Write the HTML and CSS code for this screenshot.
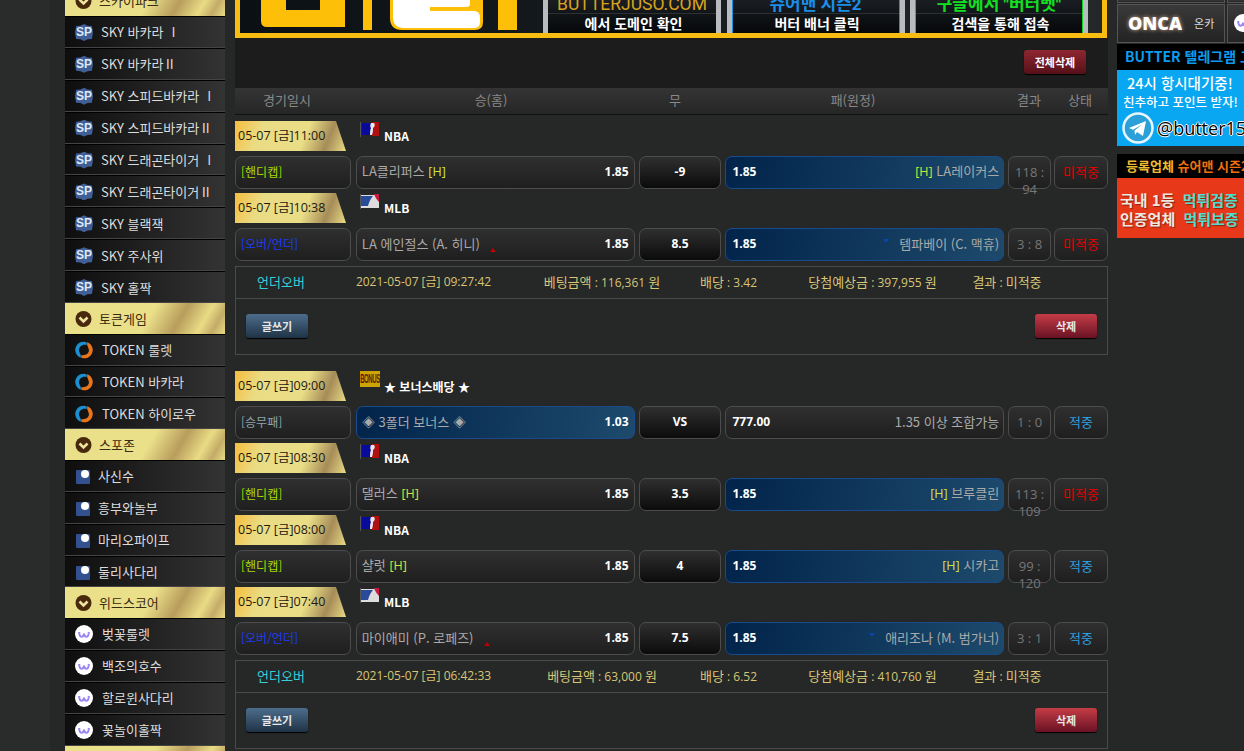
FILE: index.html
```html
<!DOCTYPE html>
<html lang="ko">
<head>
    <meta charset="UTF-8">
    <title>베팅내역</title>
    <link rel="stylesheet" href="styles.css">
</head>
<body>
    <svg class="defs" width="0" height="0">
        <symbol id="i-chev" viewBox="0 0 18 18"><circle cx="8.5" cy="9" r="8" fill="#48290c"/><path d="M4.5 7.500 8.500 11.500 12.500 7.500" fill="none" stroke="#efe3a0" stroke-width="2.600"/></symbol>
        <symbol id="i-token" viewBox="0 0 20 20"><path d="M13 1.500A9 9 0 0 0 6 18.500C8 16 4 13 4.500 9.500 5 6 9 3.500 13 4.500z" fill="#1b8fd0"/><path d="M7 18.500A9 9 0 0 0 14 1.500C12 4 15.500 7 15.500 10.500 15.500 14 11 16.500 7 15.500z" fill="#e8741c"/></symbol>
        <symbol id="i-square" viewBox="0 0 18 18"><rect x="1" y="3" width="14" height="14" rx="1" fill="#33508f"/><circle cx="10" cy="7" r="4" fill="#fff"/></symbol>
        <symbol id="i-w" viewBox="0 0 18 18"><circle cx="9" cy="9" r="9" fill="#fff"/><path d="M4.200 7c0 6 4.300 6 4.800 1.500C9.500 13 13.800 13 13.800 7" fill="none" stroke="#9c86f2" stroke-width="2"/></symbol>
        <symbol id="i-nba" viewBox="0 0 19 15"><rect width="1" height="15" fill="#555"/><rect x="2" y="1" width="11" height="12" fill="#0a0a9a"/><rect x="12" y="0" width="7" height="14" fill="#b01010"/><path d="M11 1h3c1 1 1 3 0 4l-1 1c0 2 0 4-1 7h-2c0-3 0-5 1-7-1-1-1-3 0-5z" fill="#e8e8e8"/></symbol>
        <symbol id="i-mlb" viewBox="0 0 19 15"><rect width="1" height="15" fill="#555"/><rect x="1" y="1" width="18" height="13" fill="#ddd"/><path d="M1 2H13C10 5 9 9 8 12H1z" fill="#2a4a9a"/><path d="M14 0h5v8c-2-2-4-5-5-8z" fill="#c81c3c"/></symbol>
    </svg>

    <div class="page">
        <div class="gutter"></div>

        <aside class="menu">
            <div class="menu-head first"><svg class="ico"><use href="#i-chev"/></svg>스카이파크</div>
            <a class="menu-item sp"><span class="sp-ico">SP</span>SKY 바카라 Ⅰ</a>
            <a class="menu-item sp"><span class="sp-ico">SP</span>SKY 바카라Ⅱ</a>
            <a class="menu-item sp"><span class="sp-ico">SP</span>SKY 스피드바카라 Ⅰ</a>
            <a class="menu-item sp"><span class="sp-ico">SP</span>SKY 스피드바카라Ⅱ</a>
            <a class="menu-item sp"><span class="sp-ico">SP</span>SKY 드래곤타이거 Ⅰ</a>
            <a class="menu-item sp"><span class="sp-ico">SP</span>SKY 드래곤타이거Ⅱ</a>
            <a class="menu-item sp"><span class="sp-ico">SP</span>SKY 블랙잭</a>
            <a class="menu-item sp"><span class="sp-ico">SP</span>SKY 주사위</a>
            <a class="menu-item sp"><span class="sp-ico">SP</span>SKY 홀짝</a>
            <div class="menu-head"><svg class="ico"><use href="#i-chev"/></svg>토큰게임</div>
            <a class="menu-item token"><svg class="ico"><use href="#i-token"/></svg>TOKEN 룰렛</a>
            <a class="menu-item token"><svg class="ico"><use href="#i-token"/></svg>TOKEN 바카라</a>
            <a class="menu-item token"><svg class="ico"><use href="#i-token"/></svg>TOKEN 하이로우</a>
            <div class="menu-head"><svg class="ico"><use href="#i-chev"/></svg>스포존</div>
            <a class="menu-item square"><svg class="ico"><use href="#i-square"/></svg>사신수</a>
            <a class="menu-item square"><svg class="ico"><use href="#i-square"/></svg>흥부와놀부</a>
            <a class="menu-item square"><svg class="ico"><use href="#i-square"/></svg>마리오파이프</a>
            <a class="menu-item square"><svg class="ico"><use href="#i-square"/></svg>둘리사다리</a>
            <div class="menu-head"><svg class="ico"><use href="#i-chev"/></svg>위드스코어</div>
            <a class="menu-item wind"><svg class="ico"><use href="#i-w"/></svg>벚꽃룰렛</a>
            <a class="menu-item wind"><svg class="ico"><use href="#i-w"/></svg>백조의호수</a>
            <a class="menu-item wind"><svg class="ico"><use href="#i-w"/></svg>할로윈사다리</a>
            <a class="menu-item wind"><svg class="ico"><use href="#i-w"/></svg>꽃놀이홀짝</a>
            <div class="menu-head"></div>
        </aside>

        <main class="content">
            <div class="banner">
                <svg class="banner-logo" width="303" height="33" viewBox="0 0 303 33">
                    <path d="M21 0H46V10H80V0H105V27H27Q21 27 21 21z" fill="#fdbf08"/>
                    <rect x="123" y="0" width="9" height="30" fill="#fdbf08"/>
                    <path d="M150 0H243V22Q243 30 235 30H162Q150 30 150 18z" fill="#fdbf08"/>
                    <path d="M153 0H230V4Q230 7 226 7H190V11H234Q240 11 240 18V22Q240 28 234 28H164Q153 28 153 17z" fill="#fff"/>
                    <rect x="258" y="0" width="19" height="30" fill="#fdbf08"/>
                </svg>
                <div class="ban-cards">
                    <div class="ban-card amber"><span class="ban-top">BUTTERJUSO.COM</span><span class="ban-sub">에서 도메인 확인</span></div>
                    <div class="ban-card blue"><span class="ban-top">슈어맨 시즌2</span><span class="ban-sub">버터 배너 클릭</span></div>
                    <div class="ban-card green"><span class="ban-top">구글에서 "버터벳"</span><span class="ban-sub">검색을 통해 접속</span></div>
                </div>
            </div>

            <div class="toolbar"><button class="btn btn-dark-red">전체삭제</button></div>

            <div class="table-head">
                <span>경기일시</span><span>승(홈)</span><span>무</span><span>패(원정)</span><span>결과</span><span>상태</span>
            </div>

            <section class="bet-group">
                <div class="game-title">
                    <div class="ribbon">05-07 [금]11:00</div>
                    <svg class="flag"><use href="#i-nba"/></svg><b class="league">NBA</b>
                </div>
                <div class="game-row">
                    <div class="cell type handi">[핸디캡]</div>
                    <div class="cell home"><span class="team">LA클리퍼스 <i>[H]</i></span><b>1.85</b></div>
                    <div class="cell mid">-9</div>
                    <div class="cell away on"><b>1.85</b><span class="team"><i>[H]</i> LA레이커스</span></div>
                    <div class="cell score">118 : 94</div>
                    <div class="cell status miss">미적중</div>
                </div>
                <div class="game-title">
                    <div class="ribbon">05-07 [금]10:38</div>
                    <svg class="flag"><use href="#i-mlb"/></svg><b class="league">MLB</b>
                </div>
                <div class="game-row">
                    <div class="cell type ou">[오버/언더]</div>
                    <div class="cell home"><span class="team">LA 에인절스 (A. 히니)<em class="tri-up"></em></span><b>1.85</b></div>
                    <div class="cell mid">8.5</div>
                    <div class="cell away on"><b>1.85</b><span class="team"><em class="tri-down"></em>템파베이 (C. 맥휴)</span></div>
                    <div class="cell score">3 : 8</div>
                    <div class="cell status miss">미적중</div>
                </div>
                <div class="slip">
                    <div class="slip-info">
                        <span class="slip-kind">언더오버</span>
                        <span class="num">2021-05-07 [금] 09:27:42</span>
                        <span>베팅금액<span class="num"> : 116,361 </span>원</span>
                        <span>배당<span class="num"> : 3.42</span></span>
                        <span>당첨예상금<span class="num"> : 397,955 </span>원</span>
                        <span>결과<span class="num"> : </span>미적중</span>
                    </div>
                    <div class="slip-actions">
                        <button class="btn btn-blue">글쓰기</button>
                        <button class="btn btn-red">삭제</button>
                    </div>
                </div>
            </section>

            <section class="bet-group">
                <div class="game-title">
                    <div class="ribbon">05-07 [금]09:00</div>
                    <span class="flag-bonus"><span>BONUS</span></span><b class="league bonus">★ 보너스배당 ★</b>
                </div>
                <div class="game-row">
                    <div class="cell type wdl">[승무패]</div>
                    <div class="cell home on"><span class="team">◈ 3폴더 보너스 ◈</span><b>1.03</b></div>
                    <div class="cell mid">VS</div>
                    <div class="cell away"><b>777.00</b><span class="team">1.35 이상 조합가능</span></div>
                    <div class="cell score">1 : 0</div>
                    <div class="cell status hit">적중</div>
                </div>
                <div class="game-title">
                    <div class="ribbon">05-07 [금]08:30</div>
                    <svg class="flag"><use href="#i-nba"/></svg><b class="league">NBA</b>
                </div>
                <div class="game-row">
                    <div class="cell type handi">[핸디캡]</div>
                    <div class="cell home"><span class="team">댈러스 <i>[H]</i></span><b>1.85</b></div>
                    <div class="cell mid">3.5</div>
                    <div class="cell away on"><b>1.85</b><span class="team"><i>[H]</i> 브루클린</span></div>
                    <div class="cell score">113 : 109</div>
                    <div class="cell status miss">미적중</div>
                </div>
                <div class="game-title">
                    <div class="ribbon">05-07 [금]08:00</div>
                    <svg class="flag"><use href="#i-nba"/></svg><b class="league">NBA</b>
                </div>
                <div class="game-row">
                    <div class="cell type handi">[핸디캡]</div>
                    <div class="cell home"><span class="team">샬럿 <i>[H]</i></span><b>1.85</b></div>
                    <div class="cell mid">4</div>
                    <div class="cell away on"><b>1.85</b><span class="team"><i>[H]</i> 시카고</span></div>
                    <div class="cell score">99 : 120</div>
                    <div class="cell status hit">적중</div>
                </div>
                <div class="game-title">
                    <div class="ribbon">05-07 [금]07:40</div>
                    <svg class="flag"><use href="#i-mlb"/></svg><b class="league">MLB</b>
                </div>
                <div class="game-row">
                    <div class="cell type ou">[오버/언더]</div>
                    <div class="cell home"><span class="team">마이애미 (P. 로페즈)<em class="tri-up"></em></span><b>1.85</b></div>
                    <div class="cell mid">7.5</div>
                    <div class="cell away on"><b>1.85</b><span class="team"><em class="tri-down"></em>애리조나 (M. 범가너)</span></div>
                    <div class="cell score">3 : 1</div>
                    <div class="cell status hit">적중</div>
                </div>
                <div class="slip">
                    <div class="slip-info">
                        <span class="slip-kind">언더오버</span>
                        <span class="num">2021-05-07 [금] 06:42:33</span>
                        <span>베팅금액<span class="num"> : 63,000 </span>원</span>
                        <span>배당<span class="num"> : 6.52</span></span>
                        <span>당첨예상금<span class="num"> : 410,760 </span>원</span>
                        <span>결과<span class="num"> : </span>미적중</span>
                    </div>
                    <div class="slip-actions">
                        <button class="btn btn-blue">글쓰기</button>
                        <button class="btn btn-red">삭제</button>
                    </div>
                </div>
            </section>
        </main>

        <aside class="side">
            <div class="tile-row cut"><span class="tile"></span><span class="tile"></span></div>
            <div class="tile-row">
                <span class="tile"><b class="onca">ONCA</b><small>온카</small></span>
                <span class="tile"><svg class="tile-ico"><use href="#i-w"/></svg></span>
            </div>
            <div class="tg-title">BUTTER 텔레그램 고객센터</div>
            <div class="tg-panel">
                <div class="tg-line1">24시 항시대기중!</div>
                <div class="tg-line2">친추하고 포인트 받자!</div>
                <div class="tg-id">
                    <svg width="32" height="32" viewBox="0 0 32 32"><circle cx="16" cy="16" r="14.500" fill="#2a9fd8" stroke="#e6f6ff" stroke-width="2.500"/><path d="M7 16 24 9 21 24 15 20 13 23 12.500 18.500 20 12.500 11 17.800z" fill="#fff"/></svg>
                    <span>@butter15</span>
                </div>
            </div>
            <div class="reg-title"><span>등록업체</span> <span class="reg-o">슈어맨 시즌2</span></div>
            <div class="reg-panel">
                <div>국내 1등 <span>먹튀검증</span></div>
                <div>인증업체 <span>먹튀보증</span></div>
            </div>
        </aside>
    </div>
</body>
</html>
```

FILE: styles.css
```css
* { box-sizing: border-box; }
html, body { margin: 0; height: 100%; overflow: hidden; }
body { background: #262727; color: #aaa; font-family: "Noto Sans CJK KR", "Open Sans", sans-serif; font-size: 13px; line-height: 16px; }
.defs { position: absolute; }
.page { display: flex; height: 751px; overflow: hidden; }
.gutter { width: 65px; flex: none; background: linear-gradient(90deg, #2a2b2b 0, #2a2b2b 50px, #262727 50px); }
.num { font-family: "Open Sans", "Noto Sans CJK KR", sans-serif; font-size: 12px; }

/* left menu */
.menu { width: 160px; flex: none; margin-right: 10px; }
.menu-head { display: flex; align-items: center; height: 30.6px; padding: 1px 0 0 10px; color: #3a2a10; background: linear-gradient(120deg, #ebe08a 0, #ebe08a 52%, #b89d5c 70%, #e9dc85 84%, #c4ab68 92%, #e9dc85 100%); }
.menu-head.first { margin-top: -14.6px; }
.menu-head .ico { width: 18px; height: 18px; margin-right: 6px; }
.menu-item { display: flex; align-items: center; height: 31.9px; padding: 1px 0 0 10px; color: #ddd; background: linear-gradient(90deg, #0e0e0e, #333); border-top: 1px solid #000; border-bottom: 1px solid #444; white-space: nowrap; }
.menu-item .ico { width: 18px; height: 18px; flex: none; }
.menu-item.token .ico { margin-right: 9px; }
.menu-item.square .ico { margin-right: 5px; }
.menu-item.wind .ico { margin-right: 9px; }
.sp-ico { width: 18px; height: 17px; margin-right: 8px; flex: none; text-align: center; color: #dfe8f5; font: bold 12px/17px "Liberation Sans", sans-serif; background: #3f5f96; clip-path: polygon(6% 12%, 30% 10%, 50% 0, 70% 10%, 94% 12%, 100% 50%, 94% 88%, 70% 90%, 50% 100%, 30% 90%, 6% 88%, 0 50%); }

/* banner */
.content { width: 873px; flex: none; margin-right: 9px; }
.banner { display: flex; width: 872px; height: 38px; border: 5px solid #f8bd10; border-top: 0; background: linear-gradient(90deg, #0b1014, #24282b); overflow: hidden; }
.banner-logo { flex: none; }
.ban-cards { display: flex; gap: 5.5px; }
.ban-card { display: flex; flex-direction: column; justify-content: flex-end; align-items: center; width: 178px; height: 33px; border-left: 5px solid #b9bcbf; border-right: 5px solid #b9bcbf; background: linear-gradient(#1a1e22, #06080a); white-space: nowrap; }
.ban-top { font-family: Roboto, "Noto Sans CJK KR", sans-serif; font-size: 17.5px; line-height: 18px; }
.ban-sub { height: 20px; padding-left: 3px; color: #fff; font-weight: 700; font-size: 14px; line-height: 19px; border-top: 1px solid rgba(255, 255, 255, 0.12); width: 100%; text-align: center; }
.ban-card.amber .ban-top { color: #d9a21e; }
.ban-card.blue { box-shadow: inset 1px 0 #1b8fe0, inset -1px 0 #1b8fe0; }
.ban-card.blue .ban-top { color: #1b8fe8; font-weight: 700; font-size: 17px; }
.ban-card.green { box-shadow: inset 1px 0 #10d020, inset -1px 0 #10d020; }
.ban-card.green .ban-top { color: #12e020; font-weight: 700; font-size: 17px; }

.toolbar { display: flex; justify-content: flex-end; align-items: flex-start; width: 873px; height: 50px; padding: 12px 22px 0 0; background: #1c1c1c; }

/* buttons */
.btn { width: 62px; height: 24px; padding: 0; border: 0; border-radius: 3px; color: #e8e8e8; font: 700 11px/22px "Noto Sans CJK KR", sans-serif; box-shadow: 0 1px 1px #000; }
.btn-blue { background: linear-gradient(#4d6d8c, #1f3346); }
.btn-red { background: linear-gradient(#c43c46, #6a1224); }
.btn-dark-red { background: linear-gradient(#8e2732, #561018); color: #fff; }

/* table */
.table-head { display: grid; grid-template-columns: 104px 304px 64px 292px 60px 42px; width: 873px; height: 27px; line-height: 24px; color: #888; text-align: center; background: linear-gradient(#343434, #262626); border-bottom: 1px solid #111; }
.bet-group { padding-top: 6px; margin-bottom: 10px; }
.game-title { display: flex; align-items: flex-start; height: 35px; }
.ribbon { width: 111px; height: 30px; padding-left: 3px; color: #1e1a10; font-family: "Open Sans", "Noto Sans CJK KR", sans-serif; font-size: 12.5px; line-height: 29px; background: linear-gradient(112deg, #f5bd3e 0, #eadc85 24%, #e9dd86 62%, #a68c58 82%, #e9dc85 100%); clip-path: polygon(0 0, 101px 0, 100% 100%, 0 100%); }
.flag { width: 19px; height: 15px; margin: 1px 0 0 14px; flex: none; }
.flag-bonus { width: 20px; height: 16px; margin-left: 14px; flex: none; overflow: hidden; text-align: center; color: #5a1c00; font: bold 6px/16px "Liberation Sans", sans-serif; letter-spacing: -0.4px; background: #cda404; }
.flag-bonus span { display: inline-block; transform: scaleY(2); }
.league { margin: 7px 0 0 5px; color: #fff; font-size: 12px; }
.league.bonus { margin-left: 4px; margin-top: 8px; }
.game-row { display: flex; height: 33px; margin-bottom: 4px; }
.cell { height: 33px; border: 1px solid #4c4c4c; border-radius: 7px; background: linear-gradient(#2f2f2f, #1f1f1f); }
.type { width: 116px; margin-right: 5px; padding-left: 5px; font-size: 12px; line-height: 29px; }
.type.handi { color: #a6dc00; }
.type.ou { color: #1a3cf0; }
.type.wdl { color: #8fa4ac; }
.home, .away { display: flex; justify-content: space-between; align-items: center; width: 279px; padding: 0 5px 2px; white-space: nowrap; }
.home b, .away b { color: #fff; font: 700 12px/16px "Open Sans", sans-serif; }
.home { margin-right: 4px; }
.away { margin-right: 4px; padding: 0 4px 2px 6px; }
.team i { color: #cfe63c; font: 12.5px "Open Sans", sans-serif; }
.cell.on { background: linear-gradient(100deg, #02244a, #1d4a6c); border-color: #1a4a8c; }
.mid { width: 83px; margin-right: 4px; text-align: center; color: #fff; font: 700 12px/29px "Open Sans", "Noto Sans CJK KR", sans-serif; background: linear-gradient(#2f2f2f, #0b0b0b); }
.score { width: 43px; margin-right: 3px; padding: 7px 2px 0; text-align: center; color: #777; font-family: "Open Sans", sans-serif; line-height: 17px; }
.status { width: 54px; text-align: center; line-height: 29px; }
.status.miss { color: #e00000; }
.status.hit { color: #2f9fe0; }
.tri-up, .tri-down { display: inline-block; width: 0; height: 0; border-left: 3px solid transparent; border-right: 3px solid transparent; }
.tri-up { margin-left: 10px; border-bottom: 4px solid #c00000; vertical-align: -3px; }
.tri-down { margin-right: 10px; border-top: 4px solid #0a46a8; vertical-align: 6px; }

/* slip under the games */
.slip { width: 873px; height: 89px; margin-top: 5px; border: 1px solid #4a4a4a; }
.slip-info { display: grid; grid-template-columns: 90px 195px 162px 91px 197px 72px; height: 32px; line-height: 30px; text-align: center; color: #d6c676; border-bottom: 1px solid #4a4a4a; white-space: nowrap; }
.slip-kind { color: #35d0d8; }
.slip-actions { display: flex; justify-content: space-between; padding: 15px 10px 0; }

/* right column */
.side { width: 127px; flex: none; overflow: hidden; white-space: nowrap; }
.tile-row { display: flex; gap: 2px; width: 220px; height: 39px; margin-bottom: 1px; }
.tile-row.cut { height: 3px; margin-bottom: 1px; }
.tile { display: flex; align-items: center; flex: none; width: 108px; padding: 0 0 2px 10px; border: 1px solid #555; background: linear-gradient(#3a3a3a, #232323); }
.cut .tile { border-top: 0; padding: 0; }
.onca { color: #fff; font: 800 18px/20px "Open Sans", sans-serif; text-shadow: 0 0 4px #d8b090; }
.tile small { margin-left: 12px; color: #ddd; font-size: 11px; }
.tile-ico { width: 18px; height: 18px; flex: none; margin-left: -4px; }
.tg-title { height: 26px; padding-left: 8px; color: #0c9cf0; font-weight: 700; font-size: 14px; line-height: 24px; background: #000; }
.tg-panel { height: 76px; background: #09a6f2; color: #fff; font-weight: 500; }
.tg-line1 { padding: 3px 0 0 10px; font-size: 14.5px; line-height: 20px; }
.tg-line2 { padding-left: 6px; font-size: 12.500px; line-height: 17px; }
.tg-id { display: flex; align-items: center; gap: 3px; padding: 2px 0 0 5px; color: #000; font: 18px/30px "Open Sans", sans-serif; text-shadow: 1px 0 #fff, -1px 0 #fff, 0 1px #fff, 0 -1px #fff; }
.tg-id svg { flex: none; }
.reg-title { height: 24px; margin-top: 8px; padding-left: 9px; color: #eebb30; font-weight: 700; font-size: 13px; line-height: 23px; background: #000; }
.reg-o { color: #f07010; }
.reg-panel { height: 60px; padding: 12px 0 0 3px; color: #f0e8e0; font-weight: 700; font-size: 15px; line-height: 19px; text-shadow: 1px 1px 1px rgba(90, 30, 10, 0.7); background: #e8381a; }
.reg-panel span { margin-left: 4px; color: #55ddcc; }
```
